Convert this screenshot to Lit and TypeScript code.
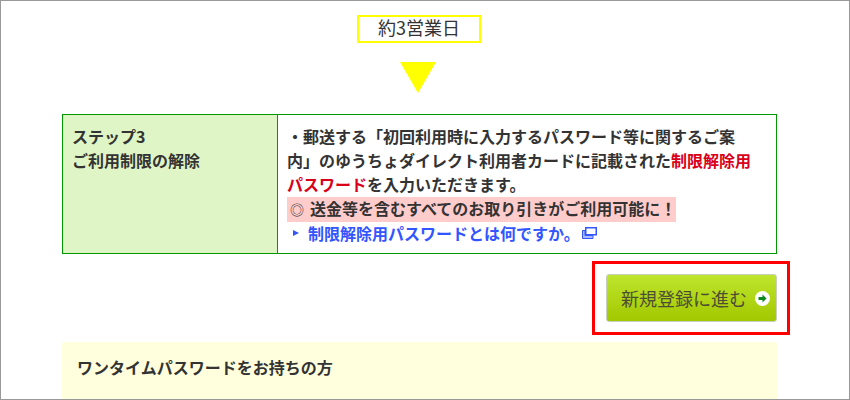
import { LitElement, html, css } from "lit";
import { customElement } from "lit/decorators.js";

@customElement("app-root")
export class AppRoot extends LitElement {
  static styles = css`
    :host {
      display: block;
      width: 850px;
      height: 400px;
      font-family: "Noto Sans CJK JP", "Noto Sans", sans-serif;
      color: #333;
    }
    .frame {
      box-sizing: border-box;
      width: 850px;
      height: 400px;
      border: 1px solid #999;
      overflow: hidden;
      display: flex;
      flex-direction: column;
      align-items: flex-start;
      padding: 14px 0 0 61px;
    }
    .frame > * { flex: none; }
    .label {
      box-sizing: border-box;
      width: 124px;
      height: 28px;
      margin-left: 295px;
      padding-bottom: 3px;
      border: 2px solid #ffff00;
      display: flex;
      align-items: center;
      justify-content: center;
      font-size: 18px;
      line-height: 23px;
    }
    .arrow {
      width: 0;
      height: 0;
      margin: 19px 0 0 338px;
      border-left: 18.5px solid transparent;
      border-right: 18.5px solid transparent;
      border-top: 31px solid #ffff00;
    }
    .table {
      box-sizing: border-box;
      width: 715px;
      height: 140px;
      margin-top: 21px;
      border: 1px solid #009900;
      display: grid;
      grid-template-columns: 215px 1fr;
      font-size: 16px;
      font-weight: 700;
      line-height: 24px;
    }
    .head {
      background: #dff5c5;
      border-right: 1px solid #009900;
      padding: 9px 9px;
    }
    .body {
      padding: 9px 23px 0 9px;
    }
    .red { color: #d9001a; }
    .pink {
      display: inline-block;
      vertical-align: top;
      background: #ffcccc;
      margin-top: 1px;
      padding: 0 0 2px 1px;
      line-height: 22px;
    }
    .mark { font-weight: 400; font-size: 14px; margin: 0 6px 0 2px; }
    .link {
      color: #3355ff;
      display: flex;
      align-items: center;
      line-height: 22px;
    }
    .tri {
      width: 0;
      height: 0;
      border-left: 6px solid #3355ff;
      border-top: 3.5px solid transparent;
      border-bottom: 3.5px solid transparent;
      margin: 0 9px 0 6px;
    }
    .win { margin-left: 2px; }
    .action {
      width: 728px;
      display: flex;
      justify-content: flex-end;
      margin-top: 7px;
    }
    .callout {
      box-sizing: border-box;
      width: 198px;
      height: 74px;
      border: 3px solid #ff0000;
      padding: 10px 10px 0 11px;
    }
    .btn {
      box-sizing: border-box;
      height: 48px;
      border: 1px solid #c9cfc0;
      border-radius: 3px;
      background: linear-gradient(#bfe52e, #a2c800);
      display: flex;
      align-items: center;
      gap: 8px;
      padding: 0 0 0 14px;
      font-size: 18px;
      color: #4d4d33;
    }
    .box {
      box-sizing: border-box;
      width: 715px;
      height: 90px;
      margin-top: 7px;
      background: #ffffdd;
      border-radius: 3px;
      padding: 13px 15px;
      font-size: 16px;
      font-weight: 700;
      line-height: 24px;
    }
  `;

  render() {
    return html`
      <div class="frame">
        <div class="label">約3営業日</div>
        <div class="arrow"></div>
        <div class="table">
          <div class="head">ステップ3<br />ご利用制限の解除</div>
          <div class="body">
            ・郵送する「初回利用時に入力するパスワード等に関するご案内」のゆうちょダイレクト利用者カードに記載された<span class="red">制限解除用パスワード</span>を入力いただきます。<br />
            <span class="pink"><span class="mark">◎</span>送金等を含むすべてのお取り引きがご利用可能に！</span>
            <div class="link">
              <span class="tri"></span>制限解除用パスワードとは何ですか。
              <svg class="win" width="15" height="12" viewBox="0 0 15 12">
                <rect x="3.75" y="0.75" width="10.5" height="7" fill="#fff" stroke="#3355ff" stroke-width="1.5" />
                <path d="M0.5 3.5H3V8.5H11V11.5H0.5Z" fill="#aabbff" stroke="#3355ff" stroke-width="1" />
              </svg>
            </div>
          </div>
        </div>
        <div class="action">
          <div class="callout">
            <div class="btn">
              新規登録に進む
              <svg width="15" height="15" viewBox="0 0 15 15">
                <circle cx="7.5" cy="7.5" r="7.5" fill="#fff" />
                <path d="M3.5 6H7.5V3.5L11.5 7.5L7.5 11.5V9H3.5Z" fill="#0a8a1a" />
              </svg>
            </div>
          </div>
        </div>
        <div class="box">ワンタイムパスワードをお持ちの方</div>
      </div>
    `;
  }
}
